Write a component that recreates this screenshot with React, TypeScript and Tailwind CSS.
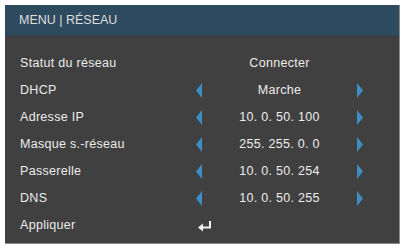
import React from "react"

type Row = {
  label: string
  value?: string
  arrows?: boolean
  enter?: boolean
}

const rows: Row[] = [
  { label: "Statut du réseau", value: "Connecter" },
  { label: "DHCP", value: "Marche", arrows: true },
  { label: "Adresse IP", value: "10. 0. 50. 100", arrows: true },
  { label: "Masque s.-réseau", value: "255. 255. 0. 0", arrows: true },
  { label: "Passerelle", value: "10. 0. 50. 254", arrows: true },
  { label: "DNS", value: "10. 0. 50. 255", arrows: true },
  { label: "Appliquer", enter: true },
]

function Arrow({ dir }: { dir: "left" | "right" }) {
  return (
    <svg width="6" height="15" viewBox="0 0 6 15" className="block">
      {dir === "left" ? (
        <polygon points="6,0 6,15 0,7.5" fill="#3d8ec4" />
      ) : (
        <polygon points="0,0 0,15 6,7.5" fill="#3d8ec4" />
      )}
    </svg>
  )
}

function EnterIcon() {
  return (
    <svg width="14" height="10" viewBox="0 0 14 10" className="block overflow-visible">
      <path d="M12 0 V6.5 H4" stroke="#f2f2f2" strokeWidth="2" fill="none" />
      <polygon points="0,6.5 5,2.5 5,10.5" fill="#f2f2f2" />
    </svg>
  )
}

export default function App() {
  return (
    <div
      className="w-[401px] h-[245px] bg-white pl-[5px] pt-[5px]"
      style={{ fontFamily: '"Liberation Sans", Arial, sans-serif' }}
    >
      <div className="w-[395px] h-[239px] bg-[#404040] border-r border-b border-[#8a8a8a] flex flex-col">
        <div className="h-[30px] bg-[#2e4a5f] flex items-center pl-[14px] text-[12.5px] text-[#dedede]">
          MENU | RÉSEAU
        </div>
        <div className="h-[3px] bg-gradient-to-b from-[#35404a] to-[#3d3d3d]" />
        <div className="flex flex-col pt-[12px]">
          {rows.map((row) => (
            <div key={row.label} className="h-[27px] flex items-center text-[12.5px] text-[#ececec]">
              <div className="w-[191px] pl-[15px] tracking-[0.3px]">{row.label}</div>
              <div className="w-[6px]">
                {row.arrows && <Arrow dir="left" />}
                {row.enter && (
                  <div className="ml-[2px] w-[14px]">
                    <EnterIcon />
                  </div>
                )}
              </div>
              <div className="w-[155px] flex justify-center tracking-[0.3px]">
                {row.value}
              </div>
              <div className="w-[6px]">{row.arrows && <Arrow dir="right" />}</div>
            </div>
          ))}
        </div>
      </div>
    </div>
  )
}
